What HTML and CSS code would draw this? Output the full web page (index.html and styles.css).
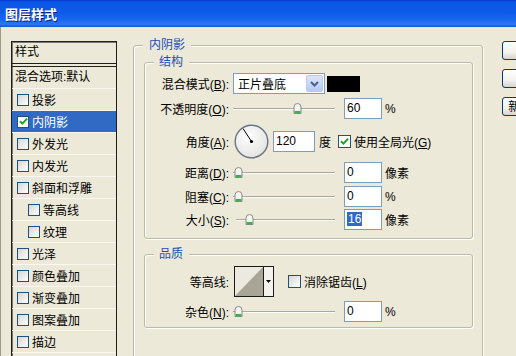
FILE: index.html
```html
<!DOCTYPE html>
<html lang="zh-CN">
<head>
<meta charset="utf-8">
<title>图层样式</title>
<link rel="stylesheet" href="styles.css">
</head>
<body>
<div class="titlebar"><span class="title">图层样式</span></div>
<div class="main">
  <div class="list">
    <div class="list-head">样式</div>
    <div class="list-blend">混合选项:默认</div>
    <div class="list-row"><span class="cb"></span>投影</div>
    <div class="list-row sel"><span class="cb on"><svg width="9" height="9" viewBox="0 0 9 9"><path d="M1 4.2 L3.4 6.6 L8 1.6" fill="none" stroke="#21a121" stroke-width="2"/></svg></span>内阴影</div>
    <div class="list-row"><span class="cb"></span>外发光</div>
    <div class="list-row"><span class="cb"></span>内发光</div>
    <div class="list-row"><span class="cb"></span>斜面和浮雕</div>
    <div class="list-row sub"><span class="cb"></span>等高线</div>
    <div class="list-row sub"><span class="cb"></span>纹理</div>
    <div class="list-row"><span class="cb"></span>光泽</div>
    <div class="list-row"><span class="cb"></span>颜色叠加</div>
    <div class="list-row"><span class="cb"></span>渐变叠加</div>
    <div class="list-row"><span class="cb"></span>图案叠加</div>
    <div class="list-row"><span class="cb"></span>描边</div>
  </div>

  <div class="group panel">
    <div class="legend">内阴影</div>

    <div class="group struct">
      <div class="legend">结构</div>

      <div class="row r-blend">
        <span class="lbl">混合模式(<u>B</u>):</span>
        <div class="select"><span>正片叠底</span><span class="arrow"><svg width="9" height="6" viewBox="0 0 9 6"><path d="M1 1 L4.5 4.5 L8 1" fill="none" stroke="#4d6185" stroke-width="2"/></svg></span></div>
        <span class="swatch"></span>
      </div>

      <div class="row r-opacity">
        <span class="lbl">不透明度(<u>O</u>):</span>
        <div class="slider"><span class="track"></span><span class="thumb" style="left:60px"><svg width="9" height="11" viewBox="0 0 9 11"><path d="M1 10.5 V4 Q1 0.5 4.5 0.5 Q8 0.5 8 4 V10.5 Z" fill="#f4f4f0" stroke="#8b8c8a"/><rect x="1.5" y="8" width="6" height="2.5" fill="#3bb34a"/></svg></span></div>
        <span class="num">60</span><span class="unit">%</span>
      </div>

      <div class="row r-angle">
        <span class="lbl">角度(<u>A</u>):</span>
        <svg class="dial" width="35" height="35" viewBox="0 0 35 35">
          <defs><radialGradient id="dg" cx="0.4" cy="0.35" r="0.7"><stop offset="0" stop-color="#ffffff"/><stop offset="1" stop-color="#e2e2e0"/></radialGradient></defs>
          <circle cx="17.5" cy="17.5" r="16.3" fill="url(#dg)" stroke="#6b7486" stroke-width="1.4"/>
          <line x1="17.5" y1="17.5" x2="9" y2="4.5" stroke="#000" stroke-width="1"/>
          <circle cx="17.5" cy="17.5" r="1.6" fill="#000"/>
        </svg>
        <span class="num angle">120</span>
        <span class="deg">度</span>
        <span class="cb on form"><svg width="9" height="9" viewBox="0 0 9 9"><path d="M1 4.2 L3.4 6.6 L8 1.6" fill="none" stroke="#21a121" stroke-width="2"/></svg></span>
        <span class="cblabel">使用全局光(<u>G</u>)</span>
      </div>

      <div class="row r-dist">
        <span class="lbl">距离(<u>D</u>):</span>
        <div class="slider"><span class="track"></span><span class="thumb" style="left:1px"><svg width="9" height="11" viewBox="0 0 9 11"><path d="M1 10.5 V4 Q1 0.5 4.5 0.5 Q8 0.5 8 4 V10.5 Z" fill="#f4f4f0" stroke="#8b8c8a"/><rect x="1.5" y="8" width="6" height="2.5" fill="#3bb34a"/></svg></span></div>
        <span class="num">0</span><span class="unit">像素</span>
      </div>

      <div class="row r-choke">
        <span class="lbl">阻塞(<u>C</u>):</span>
        <div class="slider"><span class="track"></span><span class="thumb" style="left:1px"><svg width="9" height="11" viewBox="0 0 9 11"><path d="M1 10.5 V4 Q1 0.5 4.5 0.5 Q8 0.5 8 4 V10.5 Z" fill="#f4f4f0" stroke="#8b8c8a"/><rect x="1.5" y="8" width="6" height="2.5" fill="#3bb34a"/></svg></span></div>
        <span class="num">0</span><span class="unit">%</span>
      </div>

      <div class="row r-size">
        <span class="lbl">大小(<u>S</u>):</span>
        <div class="slider"><span class="track short"></span><span class="thumb" style="left:12px"><svg width="9" height="11" viewBox="0 0 9 11"><path d="M1 10.5 V4 Q1 0.5 4.5 0.5 Q8 0.5 8 4 V10.5 Z" fill="#f4f4f0" stroke="#8b8c8a"/><rect x="1.5" y="8" width="6" height="2.5" fill="#3bb34a"/></svg></span></div>
        <span class="num"><span class="hl">16</span></span><span class="unit">像素</span>
      </div>
    </div>

    <div class="group quality">
      <div class="legend">品质</div>

      <div class="row r-contour">
        <span class="lbl">等高线:</span>
        <svg class="contour" width="40" height="31" viewBox="0 0 40 31">
          <rect x="0" y="0" width="40" height="31" fill="#ebe9e0"/>
          <polygon points="1,30 29,1 29,30" fill="#a8a596"/>
          <rect x="29.5" y="0.5" width="10" height="30" fill="#f3f2ec" stroke="#1a1a1a"/>
          <rect x="0.5" y="0.5" width="29" height="30" fill="none" stroke="#1a1a1a"/>
          <polygon points="32,14 37,14 34.5,17" fill="#000"/>
        </svg>
        <span class="cb form aa"></span>
        <span class="cblabel">消除锯齿(<u>L</u>)</span>
      </div>

      <div class="row r-noise">
        <span class="lbl">杂色(<u>N</u>):</span>
        <div class="slider"><span class="track"></span><span class="thumb" style="left:1px"><svg width="9" height="11" viewBox="0 0 9 11"><path d="M1 10.5 V4 Q1 0.5 4.5 0.5 Q8 0.5 8 4 V10.5 Z" fill="#f4f4f0" stroke="#8b8c8a"/><rect x="1.5" y="8" width="6" height="2.5" fill="#3bb34a"/></svg></span></div>
        <span class="num">0</span><span class="unit">%</span>
      </div>
    </div>
  </div>

  <div class="buttons">
    <div class="btn">确定</div>
    <div class="btn">取消</div>
    <div class="btn">新建样式(<u>W</u>)...</div>
  </div>
</div>
</body>
</html>
```

FILE: styles.css
```css
* { box-sizing: border-box; }
html, body { margin: 0; padding: 0; }
body {
  width: 516px;
  height: 356px;
  overflow: hidden;
  background: #ece9d8;
  font-family: "Liberation Sans", "Noto Sans CJK SC", sans-serif;
  font-size: 12px;
  color: #000;
}
u { text-decoration: underline; text-underline-offset: 1px; }

.titlebar {
  height: 27px;
  display: flex;
  align-items: center;
  padding-left: 5px;
  background: linear-gradient(#0936c9 0, #0b57e6 2px, #0c5ae9 45%, #1a68f0 75%, #2c76f4 90%, #0f52dc 100%);
}
.title {
  color: #fff;
  font-family: "Noto Sans CJK SC", sans-serif;
  font-weight: bold;
  font-size: 13px;
  line-height: 16px;
  text-shadow: 1px 1px 0 #0b1f7c;
}

.main {
  display: flex;
  align-items: flex-start;
  height: 329px;
  box-shadow: inset 1px 0 0 #9c9a8d;
}

/* left list */
.list {
  flex: none;
  margin: 14px 0 0 11px;
  width: 106px;
  height: 330px;
  border: 1px solid #1f1f1f;
  box-shadow: inset 1px 1px 0 #7a7970;
}
.list-head {
  height: 22px;
  line-height: 21px;
  padding-left: 3px;
  border-bottom: 1px solid #1f1f1f;
}
.list-blend {
  margin-top: 2px;
  height: 23px;
  line-height: 21px;
  padding-left: 3px;
  border-top: 1px solid #1f1f1f;
  border-bottom: 1px solid #f8f7f2;
  white-space: nowrap;
}
.list-row {
  height: 22px;
  display: flex;
  align-items: center;
  padding-left: 5px;
  border-bottom: 1px solid #f8f7f2;
  white-space: nowrap;
}
.list-row.sub { padding-left: 16px; }
.list-row.sel { background: #316ac5; color: #fff; }
.list-row .cb { margin-right: 3px; }

.cb {
  flex: none;
  width: 12px;
  height: 12px;
  border: 1px solid #1c5180;
  background: linear-gradient(135deg, #d6d6d0, #ffffff);
  display: flex;
  align-items: center;
  justify-content: center;
}
.cb.on { background: #fff; }
.cb.form { width: 13px; height: 13px; }

/* group boxes */
.group {
  border: 1px solid #bcb9a9;
  border-radius: 3px;
  box-shadow: inset 1px 1px 0 #fff, 1px 1px 0 #fff;
}
.legend {
  display: block;
  width: max-content;
  height: 16px;
  line-height: 16px;
  margin-top: -9px;
  background: #ece9d8;
  color: #1d4fb4;
}
.panel {
  flex: none;
  margin: 18px 0 0 16px;
  width: 350px;
  height: 345px;
}
.panel > .legend { margin-left: 9px; padding: 0 6px; }
.struct { margin: 9px 9px 0 10px; padding-bottom: 8px; }
.quality { margin: 15px 9px 0 10px; padding-bottom: 5px; }
.struct > .legend,
.quality > .legend { margin-left: 9px; padding: 0 6px 0 5px; }

/* rows */
.row { display: flex; align-items: center; height: 21px; white-space: nowrap; }
.lbl { flex: none; width: 84px; margin-right: 4px; text-align: right; }
.r-blend { margin-top: 3px; }
.r-opacity { margin-top: 4px; }
.r-angle { margin-top: 4px; height: 36px; }
.r-dist { margin-top: 3px; }
.r-choke { margin-top: 3px; }
.r-size { margin-top: 2px; }
.r-contour { margin-top: 4px; height: 30px; }
.r-noise { margin-top: 5px; }

.select {
  flex: none;
  width: 92px;
  height: 21px;
  border: 1px solid #7f9db9;
  background: #fff;
  display: flex;
  align-items: center;
  padding-left: 4px;
}
.arrow {
  margin: 0 1px 0 auto;
  width: 17px;
  height: 17px;
  border: 1px solid #b6cbf6;
  border-radius: 2px;
  background: linear-gradient(#dbe6fd, #b4c9f6);
  display: flex;
  align-items: center;
  justify-content: center;
}
.swatch {
  flex: none;
  margin-left: 2px;
  width: 33px;
  height: 16px;
  background: #000;
}

.slider {
  flex: none;
  position: relative;
  width: 102px;
  height: 100%;
  display: flex;
  align-items: center;
}
.track {
  flex: 1;
  height: 2px;
  border-top: 1px solid #a9a89d;
  border-bottom: 1px solid #fbfbf8;
}
.track.short { margin-left: 3px; }
.thumb {
  position: absolute;
  top: 50%;
  margin-top: -6px;
  width: 9px;
  height: 11px;
  display: block;
}
.thumb svg { display: block; }

.num {
  flex: none;
  margin-left: 9px;
  width: 38px;
  height: 21px;
  border: 1px solid #7f9db9;
  background: #fff;
  padding-left: 2px;
  line-height: 19px;
}
.hl { background: #316ac5; color: #fff; padding: 0 1px; }
.unit { margin-left: 3px; }

.dial { flex: none; margin-left: 1px; display: block; }
.num.angle { margin-left: 4px; width: 42px; }
.deg { margin-left: 4px; }
.r-angle .cb { margin-left: 7px; }
.cblabel { margin-left: 3px; }

.contour { flex: none; margin-left: 1px; display: block; }
.cb.aa { margin-left: 14px; }

/* right buttons */
.buttons {
  flex: none;
  margin: 14px 0 0 19px;
  display: flex;
  flex-direction: column;
  gap: 9px;
}
.btn {
  width: 90px;
  height: 19px;
  border: 1px solid #003c74;
  border-radius: 3px;
  background: linear-gradient(#ffffff, #f3f2ec 60%, #d9d4c8);
  display: flex;
  align-items: center;
  justify-content: center;
  white-space: nowrap;
  line-height: 16px;
}
```
